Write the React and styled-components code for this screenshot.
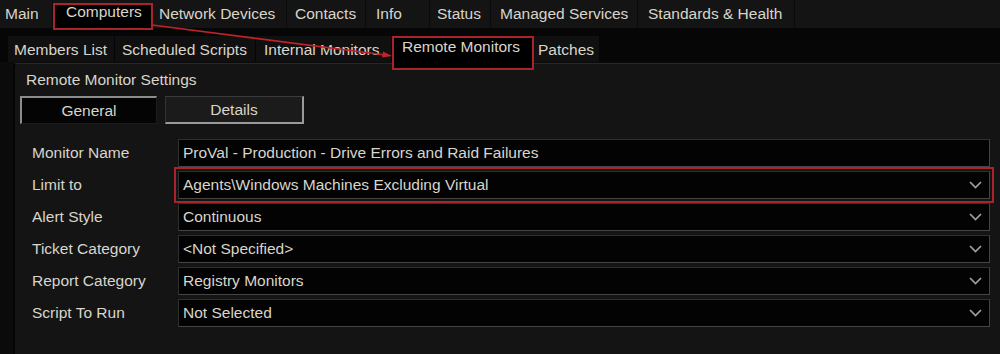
import React from "react";
import styled, { createGlobalStyle, css } from "styled-components";

const Global = createGlobalStyle`
  html, body { margin: 0; padding: 0; background: #0a0a0a; }
  body { font-family: "Liberation Sans", Arial, sans-serif; }
`;

const RED = "#a8242a";
const TEXT = "#d8d5cb";

const Frame = styled.div`
  position: relative;
  width: 1000px;
  height: 354px;
  overflow: hidden;
  background: #0b0b0b;
  font-family: "Liberation Sans", Arial, sans-serif;
  font-size: 15.5px;
  color: ${TEXT};
`;

const TopBar = styled.div`
  display: flex;
  align-items: flex-start;
  height: 28px;
  background: #141414;
`;

const TopTab = styled.div`
  box-sizing: border-box;
  width: ${(p) => p.$w}px;
  padding-left: ${(p) => p.$pl}px;
  height: 28px;
  line-height: 28px;
  white-space: nowrap;
  border-right: 1px solid #0a0a0a;
  ${(p) =>
    p.$active &&
    css`
      height: 27px;
      margin-top: 3px;
      line-height: 18px;
      background: #000;
      border-right: none;
      outline: 2px solid ${RED};
      outline-offset: -2px;
      z-index: 2;
    `}
`;

const SubBar = styled.div`
  display: flex;
  align-items: flex-start;
  height: 34px;
  box-sizing: border-box;
  padding: 8px 0 0 8px;
  background: #060606;
`;

const SubTab = styled.div`
  box-sizing: border-box;
  width: ${(p) => p.$w}px;
  padding-left: ${(p) => p.$pl}px;
  height: 26px;
  line-height: 27px;
  white-space: nowrap;
  background: #101010;
  border-right: 1px solid #050505;
  ${(p) =>
    p.$active &&
    css`
      height: 34px;
      line-height: 22px;
      background: #000;
      border-right: none;
      outline: 2px solid ${RED};
      outline-offset: -2px;
      z-index: 2;
    `}
`;

const Content = styled.div`
  padding-left: 13px;
  padding-top: 1px;
  background: #0b0b0b;
`;

const GroupBox = styled.div`
  height: 320px;
  background: #141414;
  border-top: 1px solid #272727;
  border-left: 2px solid #050505;
  border-top-left-radius: 4px;
  padding: 7px 0 0 0;
`;

const GroupLabel = styled.div`
  padding-left: 11px;
  line-height: 18px;
  height: 18px;
  color: ${TEXT};
`;

const InnerTabs = styled.div`
  display: flex;
  gap: 8px;
  margin: 7px 0 0 5px;
`;

const InnerTab = styled.div`
  box-sizing: border-box;
  width: ${(p) => p.$w}px;
  height: 28px;
  text-align: center;
  line-height: 25px;
  ${(p) =>
    p.$active
      ? css`
          background: #040404;
          border-left: 2px solid #8c8c8c;
          border-top: 2px solid #8c8c8c;
          border-right: 1px solid #1c1c1c;
          border-bottom: 1px solid #1c1c1c;
        `
      : css`
          background: #1b1b1b;
          border-left: 1px solid #333;
          border-top: 1px solid #3c3c3c;
          border-right: 2px solid #9a9a9a;
          border-bottom: 2px solid #9a9a9a;
        `}
`;

const Form = styled.div`
  display: grid;
  grid-template-columns: 146px 812px;
  grid-auto-rows: 28px;
  row-gap: 4px;
  margin: 15px 0 0 17px;
`;

const Label = styled.div`
  line-height: 28px;
  white-space: nowrap;
`;

const Field = styled.div`
  box-sizing: border-box;
  display: flex;
  align-items: center;
  justify-content: space-between;
  height: 28px;
  padding: 0 7px 0 4px;
  background: #030303;
  border: 1px solid #2f2f2f;
  border-bottom-color: #444;
  border-right-color: #444;
  white-space: nowrap;
  ${(p) =>
    p.$highlight &&
    css`
      outline: 2px solid ${RED};
      outline-offset: 2px;
    `}
`;

const Chevron = () => (
  <svg width="13" height="8" viewBox="0 0 13 8" aria-hidden="true">
    <polyline
      points="1,1 6.5,6.5 12,1"
      fill="none"
      stroke="#a0a0a0"
      strokeWidth="1.7"
    />
  </svg>
);

const Annotation = styled.svg`
  position: absolute;
  left: 0;
  top: 0;
  pointer-events: none;
  z-index: 5;
`;

const topTabs = [
  { t: "Main", w: 53, pl: 5 },
  { t: "Computers", w: 100, pl: 13, active: true },
  { t: "Network Devices", w: 134, pl: 6 },
  { t: "Contacts", w: 79, pl: 8 },
  { t: "Info", w: 64, pl: 10 },
  { t: "Status", w: 61, pl: 7 },
  { t: "Managed Services", w: 147, pl: 9 },
  { t: "Standards & Health", w: 157, pl: 10 },
];

const subTabs = [
  { t: "Members List", w: 107, pl: 6 },
  { t: "Scheduled Scripts", w: 141, pl: 7 },
  { t: "Internal Monitors", w: 136, pl: 8 },
  { t: "Remote Monitors", w: 142, pl: 10, active: true },
  { t: "Patches", w: 66, pl: 4 },
];

const rows = [
  { label: "Monitor Name", value: "ProVal - Production - Drive Errors and Raid Failures", combo: false },
  { label: "Limit to", value: "Agents\\Windows Machines Excluding Virtual", combo: true, highlight: true },
  { label: "Alert Style", value: "Continuous", combo: true },
  { label: "Ticket Category", value: "<Not Specified>", combo: true },
  { label: "Report Category", value: "Registry Monitors", combo: true },
  { label: "Script To Run", value: "Not Selected", combo: true },
];

export default function App() {
  return (
    <>
      <Global />
      <Frame>
        <TopBar>
          {topTabs.map((t) => (
            <TopTab key={t.t} $w={t.w} $pl={t.pl} $active={t.active}>
              {t.t}
            </TopTab>
          ))}
        </TopBar>
        <SubBar>
          {subTabs.map((t) => (
            <SubTab key={t.t} $w={t.w} $pl={t.pl} $active={t.active}>
              {t.t}
            </SubTab>
          ))}
        </SubBar>
        <Content>
          <GroupBox>
            <GroupLabel>Remote Monitor Settings</GroupLabel>
            <InnerTabs>
              <InnerTab $w={137} $active>General</InnerTab>
              <InnerTab $w={139}>Details</InnerTab>
            </InnerTabs>
            <Form>
              {rows.map((r) => (
                <React.Fragment key={r.label}>
                  <Label>{r.label}</Label>
                  <Field $highlight={r.highlight}>
                    <span>{r.value}</span>
                    {r.combo && <Chevron />}
                  </Field>
                </React.Fragment>
              ))}
            </Form>
          </GroupBox>
        </Content>
        <Annotation width="1000" height="354" viewBox="0 0 1000 354">
          <line x1="152" y1="25" x2="389" y2="55.5" stroke="#c0242a" strokeWidth="1.6" />
          <polygon points="392,56 383,51.5 382,57.5" fill="#c0242a" />
        </Annotation>
      </Frame>
    </>
  );
}
